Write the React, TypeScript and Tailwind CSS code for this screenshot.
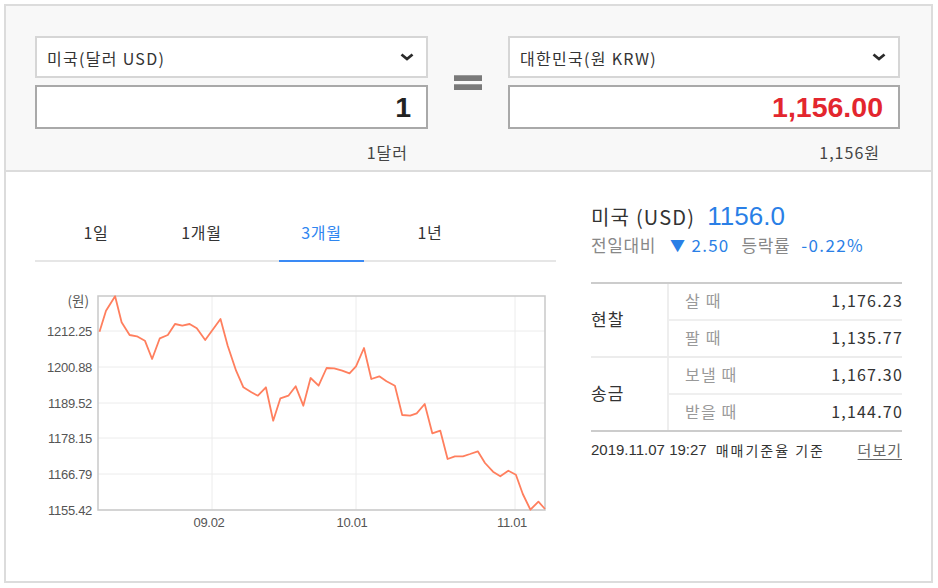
import React from "react";

const KR = "font-['Noto_Sans_CJK_KR',sans-serif]";

// chart line, page coordinates
const points: [number, number][] = [
	[99.5, 332.7], [106, 311.7], [115.1, 297.3], [121.6, 323.3], [129.6, 336],
	[136.9, 337.3], [144.9, 341.7], [152.1, 360], [159.8, 339.3], [167.8, 336],
	[175, 325], [182.3, 326.7], [189.6, 325], [196.8, 329.3], [205.2, 341],
	[220.5, 320], [227.7, 346.7], [236.1, 371.7], [243.4, 388.3], [251.4, 393.3],
	[257.9, 396.7], [265.9, 388.3], [273.2, 421.7], [280.4, 399.3], [288.4, 396.7],
	[295.7, 387.3], [303.3, 406.7], [310.6, 379], [318.6, 386.7], [326.6, 369],
	[334.2, 369.3], [342.2, 371.7], [349.5, 374.3], [356, 367.3], [364, 349],
	[371.3, 380], [379.3, 377.3], [386.5, 382.3], [394.9, 386.7], [402.2, 416],
	[410.2, 416.7], [416.7, 414.3], [424.7, 405], [432.3, 434.3], [440.3, 431.7],
	[447.6, 460], [454.9, 457.3], [462.9, 457.3], [470.1, 455], [477.8, 452.3],
	[485, 464], [493, 472.7], [500.3, 477.3], [508.3, 471.7], [515.9, 475.7],
	[522.8, 495], [530.4, 510.7], [538.4, 502.7], [545, 510],
];

const yLabels = [
	{ v: "1212.25", y: 332 },
	{ v: "1200.88", y: 368 },
	{ v: "1189.52", y: 404 },
	{ v: "1178.15", y: 439 },
	{ v: "1166.79", y: 475 },
	{ v: "1155.42", y: 511 },
];

const xLabels = [
	{ v: "09.02", x: 209, gx: 212 },
	{ v: "10.01", x: 352, gx: 356 },
	{ v: "11.01", x: 512, gx: 515 },
];

function Chevron() {
	return (
		<svg width="14" height="8" viewBox="0 0 14 8">
			<path d="M1.5 1.5 L7 6 L12.5 1.5" stroke="#2b2b2b" strokeWidth="2.8" fill="none" />
		</svg>
	);
}

function CurrencyBox({
	label,
	value,
	caption,
	valueClass,
}: {
	label: string;
	value: string;
	caption: string;
	valueClass: string;
}) {
	return (
		<div className="flex flex-col">
			<div className="h-[42px] bg-white border-2 border-[#d6d6d6] flex items-center justify-between pl-[10px] pr-[12px]">
				<span className={`${KR} text-[16px] tracking-[1.3px] text-[#333] mt-[1px]`}>{label}</span>
				<Chevron />
			</div>
			<div className="mt-[7px] h-[44px] bg-white border-2 border-[#a9a9a9] flex items-center justify-end pr-[15px]">
				<span className={`font-['Liberation_Sans',sans-serif] font-bold text-[28.5px] leading-none ${valueClass}`}>
					{value}
				</span>
			</div>
			<div className={`${KR} mt-[13px] h-[20px] leading-[20px] text-right pr-[20px] text-[16px] tracking-[1px] text-[#444]`}>
				{caption}
			</div>
		</div>
	);
}

function Chart() {
	const d = points.map((p, i) => `${i === 0 ? "M" : "L"}${p[0]} ${p[1]}`).join(" ");
	return (
		<svg width="521" height="250" viewBox="35 285 521 250" className="mt-[22px] block">
			{yLabels.map((l) => (
				<line key={l.v} x1="98" x2="545" y1={l.y} y2={l.y} stroke="#ececec" strokeWidth="1" />
			))}
			{xLabels.map((l) => (
				<line key={l.v} x1={l.gx} x2={l.gx} y1="297" y2="511" stroke="#ececec" strokeWidth="1" />
			))}
			<rect x="98" y="297" width="447" height="214" fill="none" stroke="#c9c9c9" strokeWidth="1.5" />
			<path d={d} fill="none" stroke="#ff7f5e" strokeWidth="1.8" strokeLinejoin="round" />
			<text
				x="89"
				y="307"
				textAnchor="end"
				fontSize="13.5"
				fill="#555"
				fontFamily="'Noto Sans CJK KR', sans-serif"
			>
				(원)
			</text>
			{yLabels.map((l) => (
				<text
					key={l.v}
					x="92"
					y={l.y + 4.5}
					textAnchor="end"
					fontSize="13"
					fill="#555"
					letterSpacing="-0.3"
					fontFamily="'Liberation Sans', sans-serif"
				>
					{l.v}
				</text>
			))}
			{xLabels.map((l) => (
				<text
					key={l.v}
					x={l.x}
					y="527.5"
					textAnchor="middle"
					fontSize="13"
					fill="#555"
					letterSpacing="-0.3"
					fontFamily="'Liberation Sans', sans-serif"
				>
					{l.v}
				</text>
			))}
		</svg>
	);
}

const tabs = [
	{ label: "1일", cls: "ml-[29px] w-[64px]" },
	{ label: "1개월", cls: "ml-[33px] w-[81px]" },
	{ label: "3개월", cls: "ml-[37px] w-[85px]", active: true },
	{ label: "1년", cls: "ml-[34px] w-[64px]" },
];

function Row({ label, value, border }: { label: string; value: string; border?: boolean }) {
	return (
		<div
			className={`flex items-center justify-between pl-[16px] pb-[3px] ${
				border ? "h-[37px] border-b-2 border-[#efefef]" : "h-[35px]"
			}`}
		>
			<span className={`${KR} text-[16px] tracking-[1.2px] text-[#999]`}>{label}</span>
			<span className={`${KR} text-[16px] tracking-[1.2px] text-[#333] -mr-[1px]`}>{value}</span>
		</div>
	);
}

export default function App() {
	return (
		<div className="ml-[4px] mt-[4px] w-[929px] h-[579px] border-2 border-[#dcdcdc] bg-white flex flex-col">
			{/* converter */}
			<section className="bg-[#f8f8f8] border-b-2 border-[#dcdcdc] h-[166px] pt-[30px] pl-[29px] flex">
				<div className="w-[393px]">
					<CurrencyBox label="미국(달러 USD)" value="1" caption="1달러" valueClass="text-[#222]" />
				</div>
				<div className="w-[80px] flex flex-col items-center pt-[39px] gap-[3px]">
					<div className="w-[28px] h-[6px] bg-[#7a7a7a] border-t border-[#9a9a9a]" />
					<div className="w-[28px] h-[6px] bg-[#7a7a7a] border-t border-[#9a9a9a]" />
				</div>
				<div className="w-[392px]">
					<CurrencyBox
						label="대한민국(원 KRW)"
						value="1,156.00"
						caption="1,156원"
						valueClass="text-[#e3262e]"
					/>
				</div>
			</section>

			{/* chart + rates */}
			<section className="flex pl-[29px] pt-[31px]">
				<div className="w-[521px] flex flex-col">
					<div className="flex h-[59px] border-b-2 border-[#e6e6e6]">
						{tabs.map((t) => (
							<div
								key={t.label}
								className={`relative flex items-center justify-center ${t.cls} ${KR} text-[16px] tracking-[0.8px] ${
									t.active ? "text-[#2f86f0]" : "text-[#333]"
								}`}
							>
								{t.label}
								{t.active && (
									<span className="absolute left-0 right-0 -bottom-[2px] h-[2px] bg-[#3a8af5]" />
								)}
							</div>
						))}
					</div>
					<Chart />
				</div>

				<div className="ml-[35px] w-[311px] flex flex-col">
					<div className="flex items-baseline h-[28px] mt-[-6px]">
						<span className={`${KR} text-[20px] tracking-[1.2px] text-[#333]`}>미국 (USD)</span>
						<span className="font-['Liberation_Sans',sans-serif] text-[26px] text-[#2a7fe6] ml-[12px]">
							1156.0
						</span>
					</div>
					<div className={`flex items-center h-[22px] mt-[9px] ${KR} text-[17px] tracking-[0.6px]`}>
						<span className="text-[#888]">전일대비</span>
						<span className="ml-[14px] text-[#2a7fe6] text-[15px]">▼</span>
						<span className="ml-[6px] text-[#2a7fe6] tracking-[1.2px]">2.50</span>
						<span className="ml-[12px] text-[#888]">등락률</span>
						<span className="ml-[11px] text-[#2a7fe6] tracking-[1.4px]">-0.22%</span>
					</div>

					<div className="mt-[26px] border-t-2 border-b-2 border-[#cccccc]">
						<div className="flex border-b-2 border-[#ececec]">
							<div className={`w-[78px] border-r-2 border-[#eeeeee] flex items-center pb-[3px] ${KR} text-[17px] tracking-[1px] text-[#333]`}>
								현찰
							</div>
							<div className="flex-1">
								<Row label="살 때" value="1,176.23" border />
								<Row label="팔 때" value="1,135.77" />
							</div>
						</div>
						<div className="flex">
							<div className={`w-[78px] border-r-2 border-[#eeeeee] flex items-center pb-[3px] ${KR} text-[17px] tracking-[1px] text-[#333]`}>
								송금
							</div>
							<div className="flex-1">
								<Row label="보낼 때" value="1,167.30" border />
								<Row label="받을 때" value="1,144.70" />
							</div>
						</div>
					</div>

					<div className="mt-[8px] h-[20px] flex items-center justify-between">
						<div className="flex items-center">
							<span className="font-['Liberation_Sans',sans-serif] text-[15px] text-[#333]">
								2019.11.07 19:27
							</span>
							<span className={`${KR} ml-[9px] text-[14px] tracking-[2px] text-[#333]`}>
								매매기준율 기준
							</span>
						</div>
						<a className={`${KR} text-[15px] tracking-[1px] text-[#666] underline underline-offset-[3px]`}>
							더보기
						</a>
					</div>
				</div>
			</section>
		</div>
	);
}
